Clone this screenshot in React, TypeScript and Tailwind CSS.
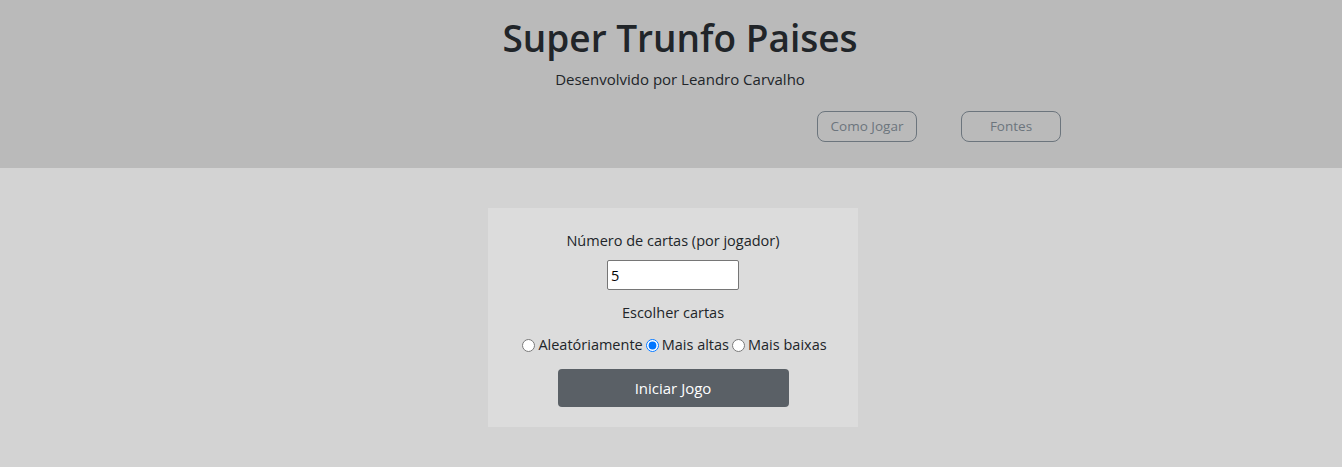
import React from 'react';

const App = () => {
  return (
    <div className="min-h-[467px] bg-[#d3d3d3] font-['Open_Sans',sans-serif] text-[#212529]">
      <header className="h-[168px] bg-[#bababa] pt-[9px]">
        <div className="flex flex-col items-center pl-[18px]">
          <h1 className="text-[37px] font-semibold leading-[58px] text-[#212529]">Super Trunfo Paises</h1>
          <p className="text-[15px] leading-[24px]">Desenvolvido por Leandro Carvalho</p>
        </div>
        <div className="mt-[20px] flex justify-center">
          <div className="ml-[536px] flex gap-[44px]">
            <button className="h-[31px] w-[100px] rounded-lg border border-[#6c757d] text-[13.5px] text-[#6c757d]">
              Como Jogar
            </button>
            <button className="h-[31px] w-[100px] rounded-lg border border-[#6c757d] text-[13.5px] text-[#6c757d]">
              Fontes
            </button>
          </div>
        </div>
      </header>
      <main className="flex justify-center pl-[4px] pt-[40px]">
        <div className="flex h-[219px] w-[370px] flex-col items-center bg-[#dcdcdc] pt-[21px]">
          <label className="text-[14.5px] leading-[24px]">Número de cartas (por jogador)</label>
          <input
            type="number"
            defaultValue={5}
            className="mt-[7px] h-[30px] w-[132px] rounded-[2px] border border-[#767676] bg-white px-[3px] text-[14.5px] text-black"
          />
          <p className="mt-[11px] text-[14.5px] leading-[24px]">Escolher cartas</p>
          <div className="mt-[8px] flex items-center text-[14.5px] leading-[24px]">
            <input type="radio" name="modo" className="m-[3px] h-[13px] w-[13px]" />
            <span>Aleatóriamente</span>
            <input type="radio" name="modo" defaultChecked className="m-[3px] h-[13px] w-[13px] accent-[#0075ff]" />
            <span>Mais altas</span>
            <input type="radio" name="modo" className="m-[3px] h-[13px] w-[13px]" />
            <span>Mais baixas</span>
          </div>
          <button className="mt-[12px] h-[38px] w-[231px] rounded-[4px] bg-[#5a6066] text-[15px] text-white">
            Iniciar Jogo
          </button>
        </div>
      </main>
    </div>
  );
};

export default App;
